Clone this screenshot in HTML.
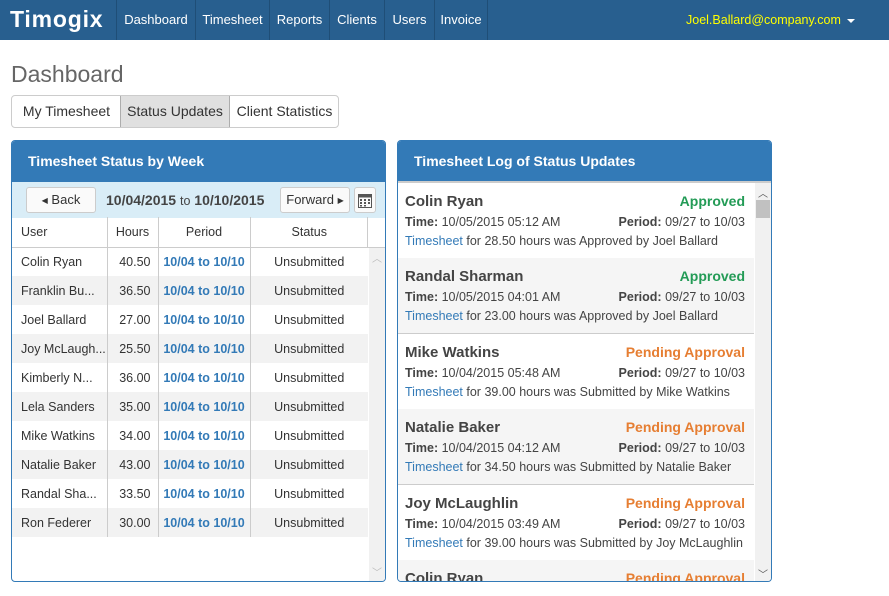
<!DOCTYPE html>
<html><head><style>
*{box-sizing:border-box;margin:0;padding:0}
html,body{overflow:hidden}
body{width:889px;height:596px;font-family:"Liberation Sans",Arial,sans-serif;font-size:13px;color:#333;background:#fff;position:relative}
.nav{position:absolute;left:0;top:0;width:889px;height:40px;background:#285f8f}
.brand{position:absolute;left:10px;top:6px;color:#fff;font-weight:bold;font-size:23px;letter-spacing:0.8px}
.ni{position:absolute;top:0;height:40px;line-height:40px;color:#fff;font-size:13px;border-left:1px solid #1f4e77;text-align:center}
.user{position:absolute;left:686px;top:0;line-height:40px;color:#ff0;font-size:12.5px}
.caret{display:inline-block;border-left:4px solid transparent;border-right:4px solid transparent;border-top:4px solid #fff;margin-left:6px;vertical-align:middle}
h1{position:absolute;left:11px;top:61px;font-size:23px;font-weight:normal;color:#666}
.bg{position:absolute;left:11px;top:95px;height:33px;width:328px;border:1px solid #ccc;border-radius:4px;overflow:hidden}
.bg div{position:absolute;top:0;height:31px;text-align:center;line-height:31px;font-size:14px;color:#333;white-space:nowrap}
.bg .act{background:#e0e0e0;border-right:1px solid #adadad;border-left:1px solid #adadad}
.panel{position:absolute;top:140px;height:442px;border:1px solid #337ab7;border-radius:4px;overflow:hidden;background:#fff}
.ph{height:41px;background:#337ab7;color:#fff;font-weight:bold;font-size:14px;line-height:40px;padding-left:16px}
.tb{position:absolute;left:0;top:41px;width:373px;height:36px;background:#d9edf7}
.btn{position:absolute;top:5px;height:26px;border:1px solid #ccc;border-radius:3px;background:#fafafa;line-height:24px;font-size:13px;color:#333;text-align:center}
.tri{font-size:8px;vertical-align:1px}
table{position:absolute;left:0;top:76px;border-collapse:collapse;width:356px;table-layout:fixed}
td,th{height:29px;font-size:12.5px;border-left:1px solid #ccc;white-space:nowrap;overflow:hidden;padding:0}
th{font-weight:normal;height:30px;border-bottom:1px solid #ccc;color:#333}
tr.g td{background:#f2f2f2}
td:first-child,th:first-child{border-left:none;padding-left:9px;text-align:left}
.per{color:#337ab7;font-weight:bold;text-align:center}
.sb{position:absolute;background:#f1f1f1;width:16px}
.it{position:absolute;left:0;width:356px;height:76px;border-bottom:1px solid #ccc;padding:0 0 0 7px}
.it.g{background:#f5f5f5}
.nm{position:absolute;left:7px;top:10px;font-weight:bold;font-size:15px;color:#444}
.st{position:absolute;right:9px;top:10px;font-weight:bold;font-size:14px}
.ap{color:#239b56}.pe{color:#e67e32}
.l2{position:absolute;left:7px;top:32px;font-size:12.5px;color:#444}
.l2r{position:absolute;right:9px;top:32px;font-size:12.5px;color:#444}
.l3{position:absolute;left:7px;top:51px;font-size:12.5px;color:#444}
.l3 span{color:#337ab7}
</style></head><body>
<div class="nav">
<div class="brand">Timogix</div>
<div class="ni" style="left:116px;width:79px">Dashboard</div>
<div class="ni" style="left:195px;width:74px">Timesheet</div>
<div class="ni" style="left:269px;width:60px">Reports</div>
<div class="ni" style="left:329px;width:55px">Clients</div>
<div class="ni" style="left:384px;width:50px">Users</div>
<div class="ni" style="left:434px;width:54px;border-right:1px solid #1f4e77">Invoice</div>
<div class="user">Joel.Ballard@company.com<span class="caret"></span></div>
</div>
<h1>Dashboard</h1>
<div class="bg"><div style="left:0;width:109px">My Timesheet</div><div class="act" style="left:108px;width:110px">Status Updates</div><div style="left:218px;width:109px">Client Statistics</div></div>

<div class="panel" style="left:11px;width:375px">
<div class="ph">Timesheet Status by Week</div>
<div class="tb">
<div class="btn" style="left:14px;width:70px"><span class="tri">◀</span> Back</div>
<div style="position:absolute;left:94px;top:10px;font-size:14px;color:#444"><b>10/04/2015</b> <span style="font-size:12.5px">to</span> <b>10/10/2015</b></div>
<div class="btn" style="left:268px;width:70px">Forward <span class="tri">▶</span></div>
<div class="btn" style="left:342px;width:22px;padding-top:4px"><svg width="14" height="15" viewBox="0 0 14 15"><rect x="0.5" y="1.5" width="13" height="13" fill="none" stroke="#555"/><rect x="0.5" y="1.5" width="13" height="3" fill="#555"/><g fill="#555"><rect x="2" y="6" width="2" height="2"/><rect x="6" y="6" width="2" height="2"/><rect x="10" y="6" width="2" height="2"/><rect x="2" y="9" width="2" height="2"/><rect x="6" y="9" width="2" height="2"/><rect x="10" y="9" width="2" height="2"/><rect x="2" y="12" width="2" height="1.5"/><rect x="6" y="12" width="2" height="1.5"/></g></svg></div>
</div>
<table>
<colgroup><col style="width:95px"><col style="width:51px"><col style="width:92px"><col style="width:118px"></colgroup>
<tr><th>User</th><th>Hours</th><th>Period</th><th>Status</th></tr>
<tr><td>Colin Ryan</td><td style="text-align:right;padding-right:7px">40.50</td><td class="per">10/04 to 10/10</td><td style="text-align:center">Unsubmitted</td></tr>
<tr class="g"><td>Franklin Bu...</td><td style="text-align:right;padding-right:7px">36.50</td><td class="per">10/04 to 10/10</td><td style="text-align:center">Unsubmitted</td></tr>
<tr><td>Joel Ballard</td><td style="text-align:right;padding-right:7px">27.00</td><td class="per">10/04 to 10/10</td><td style="text-align:center">Unsubmitted</td></tr>
<tr class="g"><td>Joy McLaugh...</td><td style="text-align:right;padding-right:7px">25.50</td><td class="per">10/04 to 10/10</td><td style="text-align:center">Unsubmitted</td></tr>
<tr><td>Kimberly N...</td><td style="text-align:right;padding-right:7px">36.00</td><td class="per">10/04 to 10/10</td><td style="text-align:center">Unsubmitted</td></tr>
<tr class="g"><td>Lela Sanders</td><td style="text-align:right;padding-right:7px">35.00</td><td class="per">10/04 to 10/10</td><td style="text-align:center">Unsubmitted</td></tr>
<tr><td>Mike Watkins</td><td style="text-align:right;padding-right:7px">34.00</td><td class="per">10/04 to 10/10</td><td style="text-align:center">Unsubmitted</td></tr>
<tr class="g"><td>Natalie Baker</td><td style="text-align:right;padding-right:7px">43.00</td><td class="per">10/04 to 10/10</td><td style="text-align:center">Unsubmitted</td></tr>
<tr><td>Randal Sha...</td><td style="text-align:right;padding-right:7px">33.50</td><td class="per">10/04 to 10/10</td><td style="text-align:center">Unsubmitted</td></tr>
<tr class="g"><td>Ron Federer</td><td style="text-align:right;padding-right:7px">30.00</td><td class="per">10/04 to 10/10</td><td style="text-align:center">Unsubmitted</td></tr>
</table>
<div style="position:absolute;left:355px;top:76px;width:18px;height:31px;border-left:1px solid #ccc;border-bottom:1px solid #ccc"></div>
<div class="sb" style="left:357px;top:107px;height:333px"><div style="color:#bbb;font-size:10px;text-align:center;margin-top:2px">︿</div><div style="color:#bbb;font-size:10px;text-align:center;position:absolute;bottom:2px;width:16px">﹀</div></div>
</div>

<div class="panel" style="left:397px;width:375px">
<div class="ph" style="border-bottom:2px solid #ccc;height:42px">Timesheet Log of Status Updates</div>
<div style="position:absolute;left:0;top:42px;width:375px;height:400px;overflow:hidden">
<div class="it" style="top:0"><div class="nm">Colin Ryan</div><div class="st ap">Approved</div><div class="l2"><b>Time:</b> 10/05/2015 05:12 AM</div><div class="l2r"><b>Period:</b> 09/27 to 10/03</div><div class="l3"><span>Timesheet</span> for 28.50 hours was Approved by Joel Ballard</div></div>
<div class="it g" style="top:75px"><div class="nm">Randal Sharman</div><div class="st ap">Approved</div><div class="l2"><b>Time:</b> 10/05/2015 04:01 AM</div><div class="l2r"><b>Period:</b> 09/27 to 10/03</div><div class="l3"><span>Timesheet</span> for 23.00 hours was Approved by Joel Ballard</div></div>
<div class="it" style="top:151px"><div class="nm">Mike Watkins</div><div class="st pe">Pending Approval</div><div class="l2"><b>Time:</b> 10/04/2015 05:48 AM</div><div class="l2r"><b>Period:</b> 09/27 to 10/03</div><div class="l3"><span>Timesheet</span> for 39.00 hours was Submitted by Mike Watkins</div></div>
<div class="it g" style="top:226px"><div class="nm">Natalie Baker</div><div class="st pe">Pending Approval</div><div class="l2"><b>Time:</b> 10/04/2015 04:12 AM</div><div class="l2r"><b>Period:</b> 09/27 to 10/03</div><div class="l3"><span>Timesheet</span> for 34.50 hours was Submitted by Natalie Baker</div></div>
<div class="it" style="top:302px"><div class="nm">Joy McLaughlin</div><div class="st pe">Pending Approval</div><div class="l2"><b>Time:</b> 10/04/2015 03:49 AM</div><div class="l2r"><b>Period:</b> 09/27 to 10/03</div><div class="l3"><span>Timesheet</span> for 39.00 hours was Submitted by Joy McLaughlin</div></div>
<div class="it g" style="top:377px"><div class="nm">Colin Ryan</div><div class="st pe">Pending Approval</div></div>
<div class="sb" style="left:357px;top:0;height:400px"><div style="color:#555;font-size:10px;text-align:center;margin-top:2px">︿</div><div style="position:absolute;left:1px;top:17px;width:14px;height:18px;background:#c1c1c1"></div><div style="color:#555;font-size:10px;text-align:center;position:absolute;bottom:2px;width:16px">﹀</div></div>
</div>
</div>
</body></html>
